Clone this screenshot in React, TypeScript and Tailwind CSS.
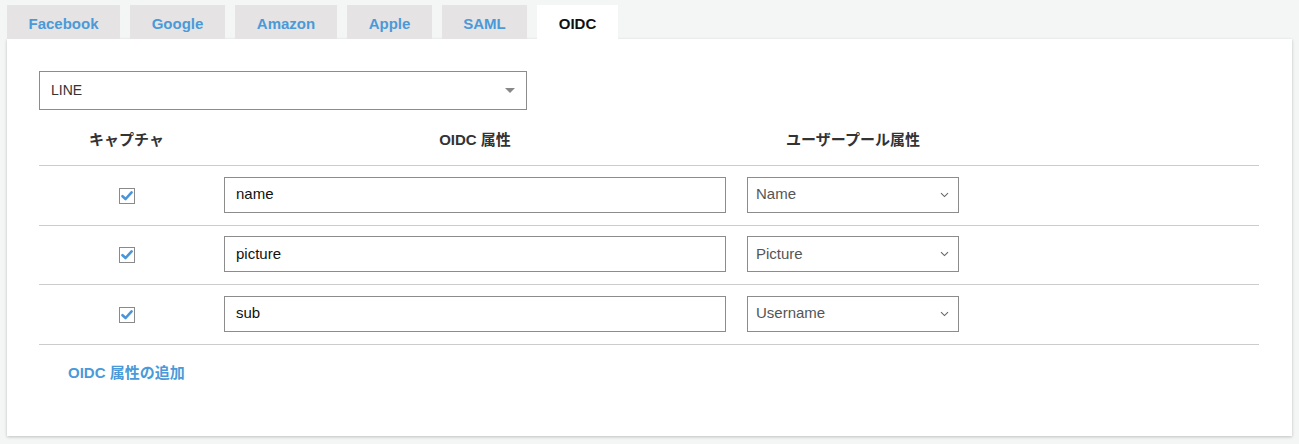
const FONT = "font-['Liberation_Sans','Noto_Sans_CJK_JP',sans-serif]";

const tabs = ["Facebook", "Google", "Amazon", "Apple", "SAML", "OIDC"];
const tabWidths: Record<string, string> = {
  Facebook: "w-[113px]",
  Google: "w-[95px]",
  Amazon: "w-[102px]",
  Apple: "w-[85px]",
  SAML: "w-[85px]",
  OIDC: "w-[81px]",
};

const rows = [
  { oidc: "name", pool: "Name" },
  { oidc: "picture", pool: "Picture" },
  { oidc: "sub", pool: "Username" },
];

function CheckBox() {
  return (
    <svg width="16" height="16" viewBox="0 0 16 16">
      <rect x="0.5" y="0.5" width="15" height="15" fill="#fff" stroke="#8a8a8a" />
      <path d="M3.5 8.2 L6.6 11 L12.6 4.4" fill="none" stroke="#4a94d8" strokeWidth="2.6" strokeLinecap="round" strokeLinejoin="round" />
    </svg>
  );
}

function Chevron() {
  return (
    <svg width="9" height="6" viewBox="0 0 9 6">
      <path d="M1 1.2 L4.5 4.6 L8 1.2" fill="none" stroke="#666" strokeWidth="1.1" />
    </svg>
  );
}

export default function App() {
  return (
    <div className={`${FONT} min-h-[444px] bg-[#f4f5f5] px-[7px] pt-[5px] pb-[8px]`}>
      <div className="flex gap-[10px]">
        {tabs.map((t) => (
          <div
            key={t}
            className={`${tabWidths[t]} h-[34px] pt-[4px] flex items-center justify-center text-[15px] font-bold ${
              t === "OIDC" ? "bg-white text-[#111]" : "bg-[#e5e3e4] text-[#4a9ad9]"
            }`}
          >
            {t}
          </div>
        ))}
      </div>

      <div className="bg-white shadow-[0_1px_3px_rgba(0,0,0,0.22)] h-[397px] pl-[32px] pr-[33px] pt-[32px]">
        <div className="w-[488px] h-[39px] border border-[#8c8c8c] flex items-center justify-between pl-[11px] pr-[11px] text-[14px] text-[#333]">
          <span>LINE</span>
          <span className="w-0 h-0 border-l-[5px] border-r-[5px] border-t-[5px] border-l-transparent border-r-transparent border-t-[#888]" />
        </div>

        <div className="grid grid-cols-[175px_522px_232px_1fr] h-[56px] items-end pb-[14px] border-b border-[#cccccc] text-[15px] font-bold text-[#333]">
          <div className="text-center">キャプチャ</div>
          <div className="text-center pl-[10px] pr-[10px]">OIDC 属性</div>
          <div className="text-center pl-[11px] pr-[9px]">ユーザープール属性</div>
          <div />
        </div>

        {rows.map((r, i) => (
          <div
            key={r.oidc}
            className={`grid grid-cols-[175px_522px_232px_1fr] ${i === 1 ? "h-[59px]" : "h-[60px]"} items-center border-b border-[#cccccc]`}
          >
            <div className="flex justify-center pl-[1px]">
              <CheckBox />
            </div>
            <div className="pl-[10px] pr-[10px]">
              <div className="h-[36px] -mt-[2px] border border-[#8c8c8c] flex items-center pl-[11px] text-[15px] text-[#111]">
                {r.oidc}
              </div>
            </div>
            <div className="pl-[11px] pr-[9px]">
              <div className="h-[36px] -mt-[2px] border border-[#8c8c8c] flex items-center justify-between pl-[8px] pr-[9px] text-[15px] text-[#555]">
                <span>{r.pool}</span>
                <Chevron />
              </div>
            </div>
            <div />
          </div>
        ))}

        <div className="pl-[29px] pt-[18px] text-[15px] font-bold text-[#4a9ad9] leading-[20px]">
          OIDC 属性の追加
        </div>
      </div>
    </div>
  );
}
